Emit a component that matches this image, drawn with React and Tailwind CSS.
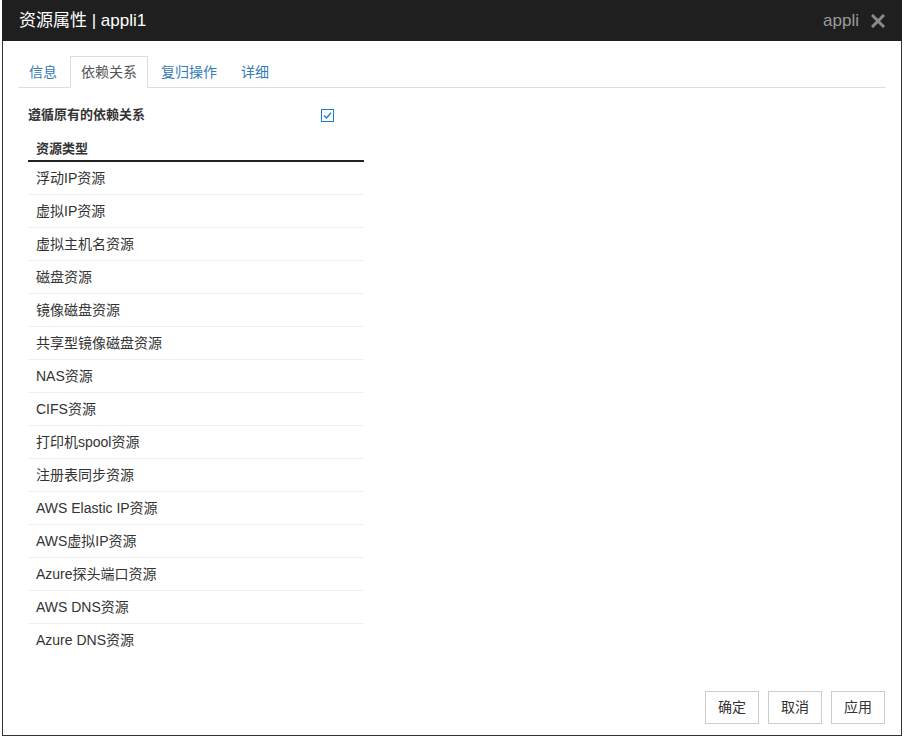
import React from "react";

const rows = [
  "浮动IP资源",
  "虚拟IP资源",
  "虚拟主机名资源",
  "磁盘资源",
  "镜像磁盘资源",
  "共享型镜像磁盘资源",
  "NAS资源",
  "CIFS资源",
  "打印机spool资源",
  "注册表同步资源",
  "AWS Elastic IP资源",
  "AWS虚拟IP资源",
  "Azure探头端口资源",
  "AWS DNS资源",
  "Azure DNS资源",
];

const tabs = ["信息", "依赖关系", "复归操作", "详细"];

const font = { fontFamily: '"Liberation Sans", "Noto Sans CJK SC", sans-serif' };

export default function App() {
  return (
    <div className="w-[904px] h-[738px] bg-white px-[2px]" style={font}>
      <div className="w-[900px] h-[736px] border border-[#333] flex flex-col">
        {/* header */}
        <div className="h-[41px] -mt-px -mx-px bg-[#1f1f1f] flex items-center pl-[17px] pr-[17px] shrink-0">
          <span className="text-white text-[17px]">资源属性 | appli1</span>
          <span className="ml-auto text-[#9a9a9a] text-[17px]">appli</span>
          <svg className="ml-[12px]" width="14" height="14" viewBox="0 0 14 14">
            <path d="M2 2 L12 12 M12 2 L2 12" stroke="#8a8a8a" strokeWidth="3" strokeLinecap="square" />
          </svg>
        </div>

        {/* body */}
        <div className="flex-1 flex flex-col pl-[15px] pr-[15px] pt-[15px]">
          <ul className="flex border-b border-[#ddd] h-[32px] pl-0">
            {tabs.map((t, i) => (
              <li
                key={t}
                className={`mr-[2px] -mb-px px-[10px] h-[32px] flex items-center text-[14px] border ${
                  i === 1
                    ? "border-[#ddd] border-b-white bg-white text-[#555]"
                    : "border-transparent text-[#337ab7]"
                }`}
              >
                {t}
              </li>
            ))}
          </ul>

          <div className="pl-[10px] w-[346px]">
            <div className="mt-[17px] h-[20px] flex items-center justify-between pr-[30px]">
              <span className="text-[13px] font-bold text-[#333]">遵循原有的依赖关系</span>
              <svg width="13" height="13" viewBox="0 0 13 13">
                <rect x="0.5" y="0.5" width="12" height="12" fill="white" stroke="#1b7ad3" />
                <path d="M3 6.5 L5.5 9 L10 3.8" fill="none" stroke="#1b7ad3" strokeWidth="1.3" />
              </svg>
            </div>

            <div className="mt-[14px] w-[336px]">
              <div className="pl-[8px] h-[23px] pb-[2px] flex items-center border-b-2 border-[#222] text-[13px] font-bold text-[#333]">
                资源类型
              </div>
              {rows.map((r, i) => (
                <div
                  key={r}
                  className={`pl-[8px] h-[33px] flex items-center text-[14px] text-[#333] ${
                    i < rows.length - 1 ? "border-b border-[#eee]" : ""
                  }`}
                >
                  {r}
                </div>
              ))}
            </div>
          </div>

          <div className="mt-auto mb-[11px] flex justify-end gap-[9px] pr-px">
            {["确定", "取消", "应用"].map((b) => (
              <button
                key={b}
                className="h-[33px] px-[12px] border border-[#ccc] bg-white text-[14px] text-[#333]"
              >
                {b}
              </button>
            ))}
          </div>
        </div>
      </div>
    </div>
  );
}
